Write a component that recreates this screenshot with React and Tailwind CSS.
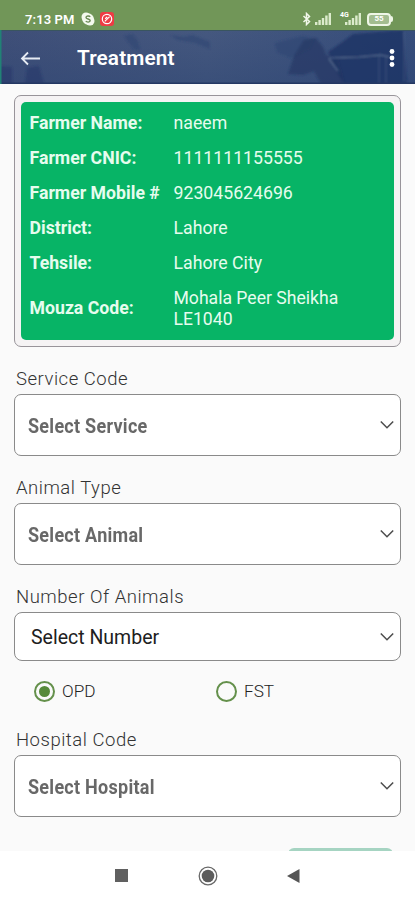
import React, { useState } from 'react';

const farmer = [
  { label: 'Farmer Name:', value: 'naeem' },
  { label: 'Farmer CNIC:', value: '1111111155555' },
  { label: 'Farmer Mobile #', value: '923045624696' },
  { label: 'District:', value: 'Lahore' },
  { label: 'Tehsile:', value: 'Lahore City' },
];

const Signal = () => (
  <svg width="17" height="12" viewBox="0 0 17 12" fill="#dcebcd">
    <rect x="0" y="9" width="2.4" height="3" />
    <rect x="3.4" y="7" width="2.4" height="5" />
    <rect x="6.8" y="5" width="2.4" height="7" />
    <rect x="10.2" y="2.5" width="2.4" height="9.5" />
    <rect x="13.6" y="0" width="2.4" height="12" />
  </svg>
);

const StatusBar = () => (
  <div className="flex h-[30px] shrink-0 items-center bg-[#719658] pl-[25px] pr-[22px] pt-[8px] text-white">
    <span className="w-[51px] whitespace-nowrap text-[13px] font-semibold leading-none tracking-[0.1px]">7:13 PM</span>
    <svg className="ml-[5px]" width="14" height="14" viewBox="0 0 14 14">
      <circle cx="5" cy="5" r="4.5" fill="#f4f9ee" />
      <circle cx="9" cy="9" r="4.5" fill="#f4f9ee" />
      <circle cx="7" cy="7" r="5.8" fill="#f4f9ee" />
      <path d="M9.2 4.8C8.4 3.6 5 3.6 5 5.4c0 2 4.2 1.2 4.2 3.2 0 1.9-3.5 1.9-4.4.4" fill="none" stroke="#6b8a55" strokeWidth="1.4" />
    </svg>
    <svg className="ml-[5px]" width="14" height="14" viewBox="0 0 14 14">
      <rect width="14" height="14" rx="3" fill="#ee3b44" />
      <circle cx="7" cy="7" r="4.7" fill="none" stroke="#fff" strokeWidth="1.2" />
      <path d="M4.8 9.4L9.6 4.6M5.2 6.8l2-1.8" stroke="#fff" strokeWidth="1.2" />
    </svg>
    <div className="ml-auto flex items-center">
      <svg width="10" height="14" viewBox="0 0 10 14" fill="none" stroke="#f1f7ea" strokeWidth="1.5">
        <path d="M1.5 4l6 5.5-3 3V1.5l3 3-6 5.5" />
      </svg>
      <span className="ml-[3px]"><Signal /></span>
      <span className="relative ml-[13px]">
        <Signal />
        <span className="absolute -left-[5px] -top-[1px] text-[7px] font-bold leading-none">4G</span>
      </span>
      <span className="ml-[5px] flex items-center">
        <span className="flex h-[13px] w-[24px] items-center justify-center rounded-[4px] border-2 border-[#eef6e6] bg-[#a3bd90] text-[8px] font-bold leading-none">
          55
        </span>
        <span className="h-[6px] w-[2px] rounded-r bg-[#eef6e6]" />
      </span>
    </div>
  </div>
);

// Faint cattle silhouettes behind the toolbar title
const HeaderArt = () => (
  <svg className="absolute inset-0" width="415" height="54" viewBox="0 0 415 54" preserveAspectRatio="none">
    <defs>
      <linearGradient id="sky" x1="0" y1="0" x2="1" y2="0">
        <stop offset="0" stopColor="#3f4f78" />
        <stop offset="0.5" stopColor="#45587f" />
        <stop offset="1" stopColor="#364d7b" />
      </linearGradient>
      <linearGradient id="shade" x1="0" y1="0" x2="0" y2="1">
        <stop offset="0" stopColor="#2a4371" stopOpacity="0" />
        <stop offset="1" stopColor="#2a4371" stopOpacity="0.4" />
      </linearGradient>
      <filter id="soft"><feGaussianBlur stdDeviation="1.2" /></filter>
    </defs>
    <rect width="415" height="54" fill="url(#sky)" />
    <rect width="415" height="54" fill="url(#shade)" />
    <g filter="url(#soft)">
      <path d="M0 36l12 1v17H0zM27 38l12-2 5 18H25z" fill="#27386b" opacity="0.6" />
      <path d="M124 6l8-2 6 7 2 9-6-1-5-6zM170 5l14 2 8-2 18 7v7l-15-6-17-3z" fill="#2c416f" opacity="0.5" />
      <path d="M275 13l16-4 12-3 12 3-5 10-19 9-14-6z" fill="#2c416f" opacity="0.5" />
      <path d="M304 10l12-2 7 9 3 8 12 3 7 26h-24l-7-13-11 4-15-1 6-18z" fill="#233764" opacity="0.65" />
      <path d="M328 22l13-9 12-9 50-4 4 54h-63l-6-10-8-18z" fill="#1e3263" opacity="0.75" />
      <path d="M329 28l30-1 22-2 8 2M329 29l9 12" fill="none" stroke="#6c83a3" strokeWidth="1.2" opacity="0.7" />
      <path d="M379 24v30M386 26v28M404 2v50" stroke="#526b92" opacity="0.5" />
    </g>
    <rect width="415" height="1" fill="#39555f" />
    <rect y="52.5" width="415" height="1.5" fill="#243863" />
    <rect width="1.5" height="54" fill="#218276" />
  </svg>
);

const Header = () => (
  <div className="relative h-[54px] shrink-0 overflow-hidden">
    <HeaderArt />
    <div className="relative flex h-full items-center pl-[20px] pr-[20px] pt-[2px]">
      <svg width="20" height="15" viewBox="0 0 20 15" fill="none" stroke="#e6ebf3" strokeWidth="1.8">
        <path d="M20 7.5H2M8 1.5l-6 6 6 6" />
      </svg>
      <h1 className="ml-[37px] pt-[1px] text-[20.8px] font-semibold leading-none tracking-[0.1px] text-white">Treatment</h1>
      <svg className="ml-auto" width="6" height="20" viewBox="0 0 6 20" fill="#fff">
        <circle cx="3" cy="3.5" r="2.4" />
        <circle cx="3" cy="10" r="2.4" />
        <circle cx="3" cy="16.5" r="2.4" />
      </svg>
    </div>
  </div>
);

const FarmerCard = () => (
  <div className="h-[252px] shrink-0 rounded-[7px] border border-[#98949a] bg-[#f5f3f4] p-[6px]">
    <div className="h-full rounded-[5px] bg-[#07b466] pl-[8.5px] pt-[4px] text-[17.7px] text-[#e6fcee]">
      {farmer.map((f) => (
        <div key={f.label} className="flex h-[35px] items-center">
          <span className="w-[144px] whitespace-nowrap font-bold">{f.label}</span>
          <span>{f.value}</span>
        </div>
      ))}
      <div className="flex h-[55px] items-center">
        <span className="w-[144px] font-bold">Mouza Code:</span>
        <span className="w-[180px] text-[17.6px] leading-[21px]">Mohala Peer Sheikha LE1040</span>
      </div>
    </div>
  </div>
);

const Chevron = () => (
  <svg className="ml-auto" width="14" height="10" viewBox="0 0 14 10" fill="none" stroke="#4c4c4c" strokeWidth="1.5">
    <path d="M0.8 1.5l6.2 6.2 6.2-6.2" />
  </svg>
);

const Label = ({ children }) => (
  <div className="flex h-[30px] items-center pl-[2px] pt-[1px] text-[18.5px] font-light leading-none tracking-[0.52px] text-[#333]">
    {children}
  </div>
);

const SelectBox = ({ text }) => (
  <button className="flex h-[62px] w-full items-center rounded-[7px] border border-[#8a8a8a] bg-white pl-[13px] pr-[6px]">
    <span className="origin-left scale-x-[0.9] whitespace-nowrap pt-[2px] text-[20px] font-bold tracking-[0.3px] text-[#686868]">{text}</span>
    <Chevron />
  </button>
);

const Radio = ({ label, checked, onClick }) => (
  <button onClick={onClick} className="flex w-[182px] items-center text-left">
    <span className="flex h-[21px] w-[21px] items-center justify-center rounded-full border-2 border-[#64904b]">
      {checked && <span className="h-[11px] w-[11px] rounded-full bg-[#568a3a]" />}
    </span>
    <span className="ml-[7px] text-[17.2px] font-light leading-none text-[#222]">{label}</span>
  </button>
);

const App = () => {
  const [type, setType] = useState('OPD');

  return (
    <div className="flex h-[900px] w-[415px] flex-col overflow-hidden bg-[#fafafa] font-['Roboto',sans-serif]">
      <StatusBar />
      <Header />
      <main className="flex h-[767px] shrink-0 flex-col overflow-hidden px-[14px] pt-[11px]">
        <FarmerCard />
        <div className="mt-[17px] shrink-0">
          <Label>Service Code</Label>
          <SelectBox text="Select Service" />
        </div>
        <div className="mt-[17px] shrink-0">
          <Label>Animal Type</Label>
          <SelectBox text="Select Animal" />
        </div>
        <div className="mt-[17px] shrink-0">
          <Label>Number Of Animals</Label>
          <button className="flex h-[49px] w-full items-center rounded-[8px] border border-[#8a8a8a] bg-white pl-[16px] pr-[6px]">
            <span className="pt-[2px] text-[19.5px] text-[#202020]">Select Number</span>
            <Chevron />
          </button>
        </div>
        <div className="flex h-[61px] shrink-0 items-center pl-[20px]">
          <Radio label="OPD" checked={type === 'OPD'} onClick={() => setType('OPD')} />
          <Radio label="FST" checked={type === 'FST'} onClick={() => setType('FST')} />
        </div>
        <div className="mt-[3px] shrink-0">
          <Label>Hospital Code</Label>
          <SelectBox text="Select Hospital" />
        </div>
        <div className="ml-auto mr-[8px] mt-[31px] h-[48px] w-[105px] shrink-0 rounded-[6px] bg-[#a6d4c2]" />
      </main>
      <nav className="flex h-[49px] shrink-0 items-center bg-white pl-[115px]">
        <span className="h-[13px] w-[13px] bg-[#606060]" />
        <svg className="ml-[70px]" width="20" height="20" viewBox="0 0 20 20">
          <circle cx="10" cy="10" r="8.8" fill="none" stroke="#686868" strokeWidth="1.3" />
          <circle cx="10" cy="10" r="6.3" fill="#5c5c5c" />
        </svg>
        <svg className="ml-[69px]" width="13" height="14" viewBox="0 0 13 14">
          <path d="M12.5 0v14L0 7z" fill="#555" />
        </svg>
      </nav>
    </div>
  );
};

export default App;
